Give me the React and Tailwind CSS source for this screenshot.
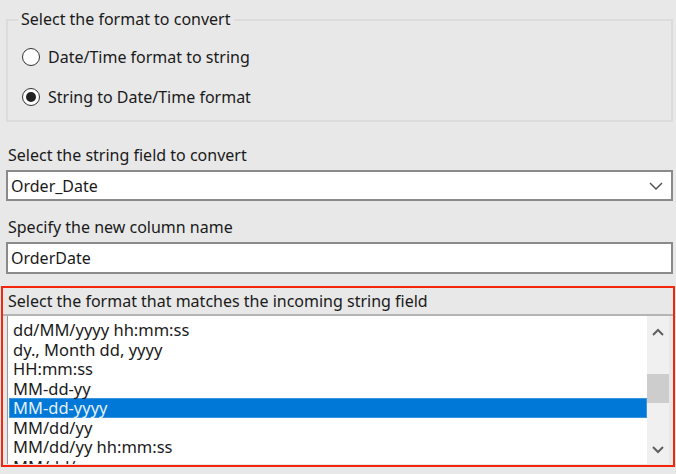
import React from 'react';

const formats = [
  'dd/MM/yyyy hh:mm:ss',
  'dy., Month dd, yyyy',
  'HH:mm:ss',
  'MM-dd-yy',
  'MM-dd-yyyy',
  'MM/dd/yy',
  'MM/dd/yy hh:mm:ss',
  'MM/dd/yyyy',
];

const Radio = ({ checked, label }) => (
  <div className="flex items-center gap-[8px] h-[20px]">
    <div className="w-[18px] h-[18px] rounded-full border border-[#333] bg-white flex items-center justify-center">
      {checked && <div className="w-[10px] h-[10px] rounded-full bg-[#222]" />}
    </div>
    <span>{label}</span>
  </div>
);

export default function App() {
  return (
    <div
      className="w-[676px] h-[474px] bg-[#e8e8e8] text-[16px] text-[#1a1a1a] overflow-hidden flex flex-col"
      style={{ fontFamily: '"Noto Sans", "Open Sans", sans-serif' }}
    >
      {/* Group box */}
      <div className="relative ml-[6px] mr-[3px] mt-[19px] h-[103px] border-2 border-[#dcdcdc] pl-[14px] pt-[26px] flex flex-col gap-[20px]">
        <span className="absolute left-[10px] top-[-12px] px-[3px] bg-[#e8e8e8] leading-[20px]">
          Select the format to convert
        </span>
        <Radio label="Date/Time format to string" />
        <Radio checked label="String to Date/Time format" />
      </div>

      {/* String field */}
      <div className="pl-[6px] pr-[3px] mt-[23px] flex flex-col">
        <span className="pl-[2px] leading-[20px]">Select the string field to convert</span>
        <div className="mt-[5px] h-[31px] border-2 border-[#8a8a8a] bg-white flex items-center justify-between pl-[3px] pr-[8px]">
          <span className="text-[16px]">Order_Date</span>
          <svg width="14" height="8" viewBox="0 0 14 8" fill="none" stroke="#555" strokeWidth="1.5">
            <path d="M1 1l6 6 6-6" />
          </svg>
        </div>
        <span className="pl-[2px] mt-[16px] leading-[20px]">Specify the new column name</span>
        <div className="mt-[5px] h-[32px] border-2 border-[#8a8a8a] bg-white flex items-center pl-[3px]">
          <span className="text-[16px]">OrderDate</span>
        </div>
      </div>

      {/* Highlighted format list */}
      <div className="mx-[1px] mt-[12px] h-[181px] border-2 border-[#f5260c] flex flex-col overflow-hidden">
        <div className="h-[28px] pl-[5px] flex items-center border-b-2 border-[#b4b4b4]">
          Select the format that matches the incoming string field
        </div>
        <div className="flex-1 ml-[4px] mr-[4px] mb-[1px] bg-white flex border-l border-[#999] overflow-hidden">
          <div className="flex-1 pt-[4px] pl-[1px] text-[16.5px] overflow-hidden">
            {formats.map((f) => (
              <div
                key={f}
                className={
                  f === 'MM-dd-yyyy'
                    ? 'h-[19.5px] leading-[18px] pl-[3px] bg-[#0078d7] text-[#e6f0fa] border border-[#3a95e0]'
                    : 'h-[19.5px] leading-[19px] pl-[4px]'
                }
              >
                {f}
              </div>
            ))}
          </div>
          <div className="w-[22px] bg-[#f0f0f0] flex flex-col items-center">
            <svg className="mt-[12px]" width="12" height="8" viewBox="0 0 12 8" fill="none" stroke="#606060" strokeWidth="2">
              <path d="M1 7l5-5 5 5" />
            </svg>
            <div className="mt-[38px] w-[22px] h-[29px] bg-[#cdcdcd]" />
            <div className="flex-1" />
            <svg className="mb-[10px]" width="12" height="8" viewBox="0 0 12 8" fill="none" stroke="#606060" strokeWidth="2">
              <path d="M1 1l5 5 5-5" />
            </svg>
          </div>
        </div>
      </div>
    </div>
  );
}
